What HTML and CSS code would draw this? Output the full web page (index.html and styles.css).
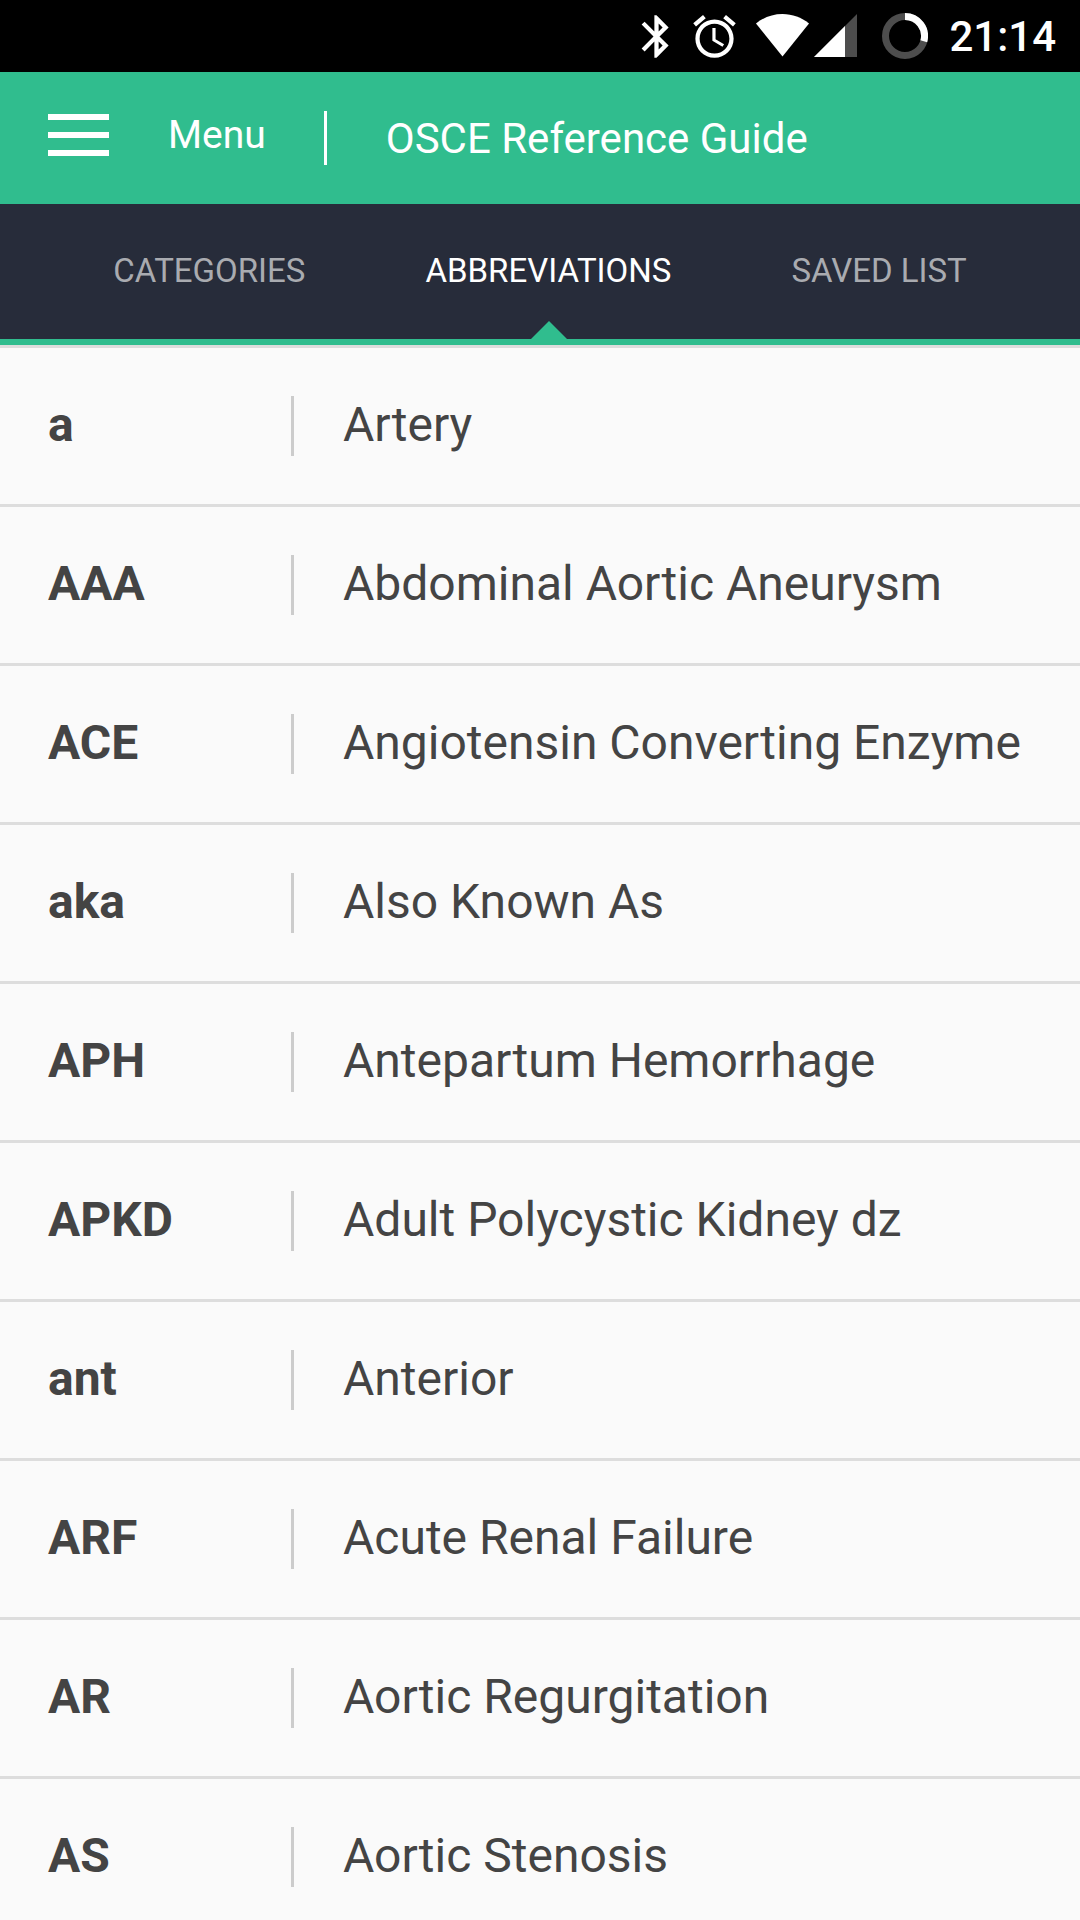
FILE: index.html
```html
<!DOCTYPE html>
<html lang="en">
<head>
    <meta charset="UTF-8">
    <meta name="viewport" content="width=device-width, initial-scale=1.0">
    <title>OSCE Reference Guide</title>
    <link rel="stylesheet" href="styles.css">
</head>
<body>
    <div class="status-bar">
        <svg class="icon-bluetooth" width="51" height="51" viewBox="0 0 24 24" fill="#fff">
            <path d="M17.71 7.71L12 2h-1v7.59L6.41 5 5 6.41 10.59 12 5 17.59 6.41 19 11 14.41V22h1l5.71-5.71-4.3-4.29 4.3-4.29zM13 5.83l1.88 1.88L13 9.59V5.83zm1.88 10.46L13 18.17v-3.76l1.88 1.88z"/>
        </svg>
        <svg class="icon-alarm" width="51" height="51" viewBox="0 0 24 24" fill="#fff">
            <path d="M22 5.72l-4.6-3.86-1.29 1.53 4.6 3.86L22 5.72zM7.88 3.39L6.6 1.86 2 5.71l1.29 1.53 4.59-3.85zM12.5 8H11v6l4.75 2.85.75-1.23-4-2.37V8zM12 4c-4.97 0-9 4.03-9 9s4.02 9 9 9c4.97 0 9-4.03 9-9s-4.03-9-9-9zm0 16c-3.87 0-7-3.13-7-7s3.13-7 7-7 7 3.13 7 7-3.13 7-7 7z"/>
        </svg>
        <svg class="icon-wifi" width="53" height="44" viewBox="0 0 53 44" fill="#fff">
            <path d="M26.500 42.500L0 9.500C7.500 3.500 16.500 0 26.500 0S45.500 3.500 53 9.500z"/>
        </svg>
        <svg class="icon-signal" width="43" height="44" viewBox="0 0 43 44">
            <path d="M0 43L43 0v43z" fill="#4d4d4d"/>
            <path d="M0 43L31 12v31z" fill="#fff"/>
        </svg>
        <svg class="icon-battery" width="46" height="46" viewBox="0 0 46 46" fill="none" stroke-width="7">
            <circle cx="23" cy="23" r="19.500" stroke="#4d4d4d"/>
            <path d="M23 3.500A19.500 19.500 0 0 1 41.800 28.200" stroke="#fff"/>
        </svg>
        <span class="clock">21:14</span>
    </div>

    <header class="header">
        <button type="button" class="menu-button">
            <span class="hamburger"><i></i><i></i><i></i></span>
            Menu
        </button>
        <h1>OSCE Reference Guide</h1>
    </header>

    <nav class="tabs">
        <a href="#categories">CATEGORIES</a>
        <a href="#abbreviations" class="active">ABBREVIATIONS</a>
        <a href="#saved">SAVED LIST</a>
    </nav>

    <main class="list" id="abbreviations">
        <table>
            <tr><th scope="row">a</th><td><span>Artery</span></td></tr>
            <tr><th scope="row">AAA</th><td><span>Abdominal Aortic Aneurysm</span></td></tr>
            <tr><th scope="row">ACE</th><td><span>Angiotensin Converting Enzyme</span></td></tr>
            <tr><th scope="row">aka</th><td><span>Also Known As</span></td></tr>
            <tr><th scope="row">APH</th><td><span>Antepartum Hemorrhage</span></td></tr>
            <tr><th scope="row">APKD</th><td><span>Adult Polycystic Kidney dz</span></td></tr>
            <tr><th scope="row">ant</th><td><span>Anterior</span></td></tr>
            <tr><th scope="row">ARF</th><td><span>Acute Renal Failure</span></td></tr>
            <tr><th scope="row">AR</th><td><span>Aortic Regurgitation</span></td></tr>
            <tr><th scope="row">AS</th><td><span>Aortic Stenosis</span></td></tr>
        </table>
    </main>
</body>
</html>
```
FILE: styles.css
```css
* {
    box-sizing: border-box;
}

body {
    font-family: Roboto, sans-serif;
    margin: 0;
    background-color: #fafafa;
    color: #444;
    display: flex;
    flex-direction: column;
    height: 100vh;
    overflow: hidden;
}

/* status bar */
.status-bar {
    display: flex;
    align-items: center;
    justify-content: flex-end;
    flex-shrink: 0;
    height: 72px;
    padding-right: 24px;
    background-color: #000;
    color: #fff;
}

.icon-alarm {
    margin-left: 7px;
}

.icon-wifi {
    margin-left: 16px;
}

.icon-signal {
    margin-left: 5px;
}

.icon-battery {
    margin-left: 25px;
}

.clock {
    margin-left: 21px;
    padding-top: 1px;
    font-size: 42px;
    font-weight: 500;
}

/* header */
.header {
    display: flex;
    align-items: center;
    flex-shrink: 0;
    height: 132px;
    padding: 0 48px;
    background-color: #30bd8e;
    color: #fff;
}

.menu-button {
    display: flex;
    align-items: center;
    gap: 59px;
    height: 54px;
    padding: 0 58px 7px 0;
    border: none;
    background: none;
    color: #fff;
    font-family: inherit;
    font-size: 39px;
    cursor: pointer;
}

.hamburger {
    display: flex;
    flex-direction: column;
    gap: 12px;
}

.hamburger i {
    width: 61px;
    height: 6px;
    background-color: #fff;
}

.header h1 {
    height: 54px;
    margin: 0;
    padding-left: 59px;
    border-left: 3px solid #fff;
    font-size: 42px;
    font-weight: 400;
    line-height: 56px;
}

/* tabs */
.tabs {
    display: flex;
    justify-content: center;
    gap: 120px;
    flex-shrink: 0;
    height: 141px;
    background-color: #272c3a;
    border-bottom: 6px solid #30bd8e;
}

.tabs a {
    position: relative;
    display: flex;
    align-items: center;
    padding-bottom: 2px;
    color: #a9abb0;
    font-size: 33px;
    text-decoration: none;
}

.tabs .active {
    color: #fff;
}

.tabs .active::after {
    content: "";
    position: absolute;
    bottom: 0;
    left: 50%;
    margin-left: -17px;
    border: 18px solid transparent;
    border-top: none;
    border-bottom-color: #30bd8e;
}

/* list */
.list {
    flex: 1;
    min-height: 0;
    overflow-y: auto;
    scrollbar-width: none;
    border-top: 3px solid #ddd;
}

.list table {
    width: 100%;
    border-spacing: 0;
}

.list th,
.list td {
    padding: 48px 0;
    border-bottom: 3px solid #ddd;
    font-size: 48px;
    line-height: 58px;
    text-align: left;
    vertical-align: top;
}

.list th {
    width: 291px;
    padding-left: 48px;
    font-weight: 700;
}

.list td span {
    display: block;
    height: 60px;
    padding-left: 49px;
    border-left: 3px solid #ccc;
}
```
